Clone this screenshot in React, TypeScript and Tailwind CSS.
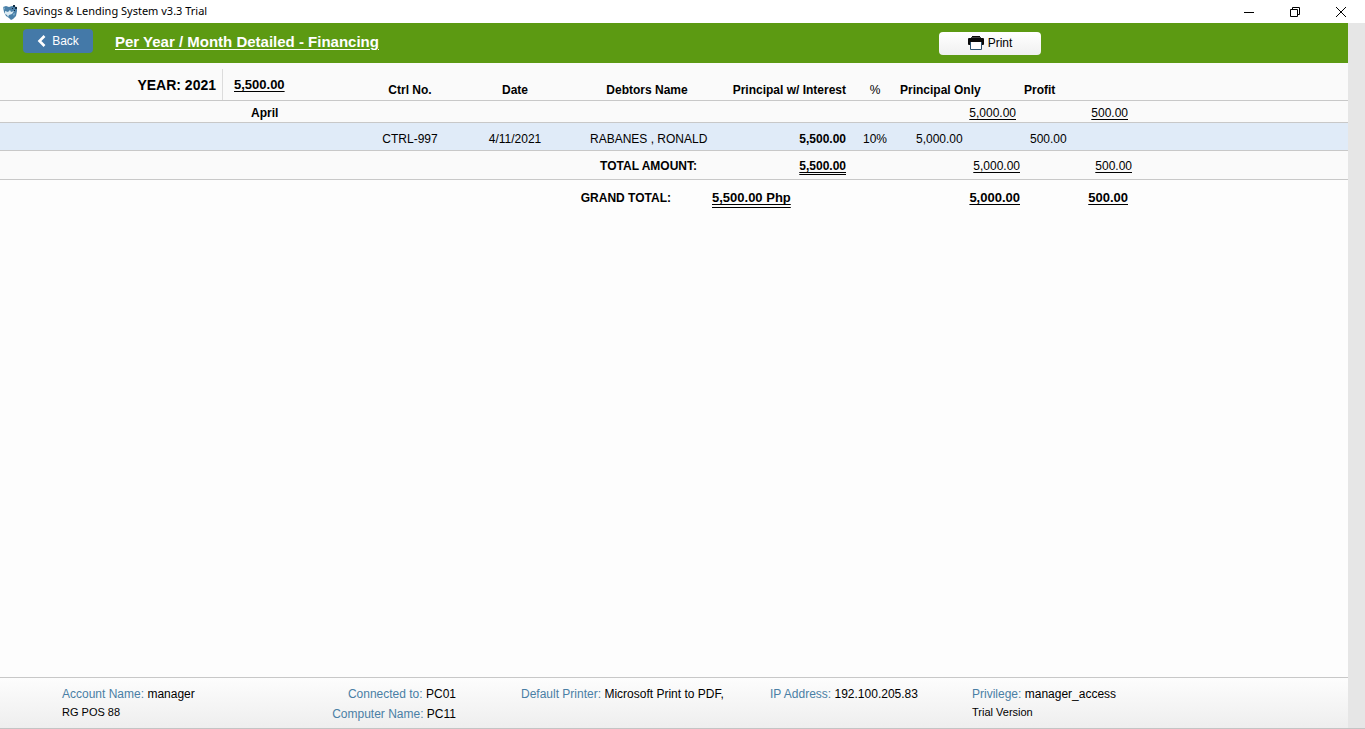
interface Loan {
    ctrlNo: string;
    date: string;
    debtor: string;
    total: string;
    rate: string;
    principal: string;
    profit: string;
}

const loans: Loan[] = [
    {
        ctrlNo: 'CTRL-997',
        date: '4/11/2021',
        debtor: 'RABANES , RONALD',
        total: '5,500.00',
        rate: '10%',
        principal: '5,000.00',
        profit: '500.00',
    },
];

function AppLogo() {
    return (
        <svg viewBox="0 0 16 16" className="h-4 w-4" aria-hidden="true">
            <path d="M1 3l3-1 3 1 3-1 5 1v4l-1 5-3 3-2 1-2-2-3-2-2-4z" fill="#4a80a8" />
            <path d="M3 7l3 1 2-2 1 2 3-1-2 3-3 1-1 2-1-2-2-1z" fill="#dcebf3" />
            <path d="M11 1h2v2h-2zM13 3h2v2h-2zM10 4h1v1h-1zM12 6h1v1h-1z" fill="#142f45" />
            <path d="M1 3l2 1-1 2zM11 10l2-1-1 3z" fill="#8fbad2" />
        </svg>
    );
}

function BackIcon() {
    return (
        <svg viewBox="0 0 9 12" className="h-3 w-[9px]" fill="none" stroke="#fff" strokeWidth="2.600" aria-hidden="true">
            <path d="M7.500 1L2.500 6l5 5" />
        </svg>
    );
}

function PrinterIcon() {
    return (
        <svg viewBox="0 0 16 14" className="h-3.5 w-4" aria-hidden="true">
            <path d="M4 0h8v1H4zM1 2h14q1 0 1 1v5q0 1-1 1H1Q0 9 0 8V3q0-1 1-1z" fill="#0a0a0a" />
            <path d="M3 1h10v1H3z" fill="#444" />
            <path d="M2.500 5.500h11v8h-11z" fill="#fff" stroke="#29506f" />
            <path d="M2 5h12v1H2z" fill="#0a0a0a" />
        </svg>
    );
}

function MinimizeIcon() {
    return (
        <svg viewBox="0 0 10 10" className="h-2.5 w-2.5" stroke="#000" aria-hidden="true">
            <path d="M0 5.500h10" />
        </svg>
    );
}

function RestoreIcon() {
    return (
        <svg viewBox="0 0 10 10" className="h-2.5 w-2.5" fill="none" stroke="#000" aria-hidden="true">
            <path d="M.5 2.500h7v7h-7zM2.500 2.500v-2h7v7h-2" />
        </svg>
    );
}

function CloseIcon() {
    return (
        <svg viewBox="0 0 10 10" className="h-2.5 w-2.5" stroke="#000" aria-hidden="true">
            <path d="M0 0l10 10M10 0L0 10" />
        </svg>
    );
}

function Info({ label, value }: { label: string; value: string }) {
    return (
        <p className="whitespace-nowrap">
            <span className="text-[#4a7fa5]">{label}:</span> {value}
        </p>
    );
}

export default function App() {
    return (
        <div className="flex min-h-screen flex-col border-b border-[#c4c4c4] bg-white font-['Liberation_Sans',Arial,sans-serif] text-xs text-black">
            {/* Window title bar */}
            <div className="flex h-[23px] items-center justify-between pl-0.5">
                <div className="flex items-center gap-[5px]">
                    <AppLogo />
                    <h1 className="font-['Noto_Sans',sans-serif] text-[11px]">Savings &amp; Lending System v3.3 Trial</h1>
                </div>
                <div className="flex pr-px">
                    <button aria-label="Minimize" className="flex h-5 w-[46px] items-center justify-center">
                        <MinimizeIcon />
                    </button>
                    <button aria-label="Restore" className="flex h-5 w-[46px] items-center justify-center">
                        <RestoreIcon />
                    </button>
                    <button aria-label="Close" className="flex h-5 w-[46px] items-center justify-center">
                        <CloseIcon />
                    </button>
                </div>
            </div>

            <div className="flex flex-1">
                <div className="flex min-w-0 flex-1 flex-col">
                    {/* Toolbar */}
                    <header className="flex h-10 items-center bg-[#5c9a12] pl-[23px]">
                        <button className="mb-1 flex h-6 w-[70px] items-center justify-center gap-1.5 rounded-sm bg-[#4479a8] text-white">
                            <BackIcon />
                            Back
                        </button>
                        <h2 className="ml-[22px] w-[824px] pb-0.5 text-[15px] font-bold text-white underline underline-offset-2">
                            Per Year / Month Detailed - Financing
                        </h2>
                        <button className="flex h-[23px] w-[102px] items-center justify-center gap-1 rounded-sm bg-linear-to-b from-white to-[#f0f0f0]">
                            <PrinterIcon />
                            Print
                        </button>
                    </header>

                    <main className="flex-1 bg-[#fdfdfd]">
                        <table className="w-full table-fixed border-separate border-spacing-0 whitespace-nowrap">
                            <colgroup>
                                <col className="w-[223px]" />
                                <col className="w-[135px]" />
                                <col className="w-[104px]" />
                                <col className="w-[106px]" />
                                <col className="w-[144px]" />
                                <col className="w-[134px]" />
                                <col className="w-[54px]" />
                                <col className="w-[120px]" />
                                <col className="w-[112px]" />
                                <col />
                            </colgroup>
                            <thead>
                                <tr className="h-[38px] bg-[#fafafa] *:border-b *:border-[#c8c8c8] *:p-0">
                                    <th className="pt-1.5! text-right text-sm">
                                        <div className="border-r border-[#dcdcdc] pt-1.5 pr-1.5 pb-[5px]">YEAR: 2021</div>
                                    </th>
                                    <th className="pt-1.5! text-left text-[13px]">
                                        <span className="ml-[11px] underline underline-offset-2">5,500.00</span>
                                    </th>
                                    <th className="pt-4!">Ctrl No.</th>
                                    <th className="pt-4!">Date</th>
                                    <th className="pt-4! pl-3.5!">Debtors Name</th>
                                    <th className="pt-4! text-right">Principal w/ Interest</th>
                                    <th className="pt-4! pl-1! font-normal">%</th>
                                    <th className="pt-4! text-left">Principal Only</th>
                                    <th className="pt-4! pl-1! text-left">Profit</th>
                                    <th />
                                </tr>
                            </thead>
                            <tbody>
                                <tr className="h-[22px] bg-[#fafafa] *:border-b *:border-[#c8c8c8] *:p-0 *:pt-0.5">
                                    <td />
                                    <th className="pl-7! text-left">April</th>
                                    <td colSpan={5} />
                                    <td className="pr-1! text-right underline underline-offset-2">5,000.00</td>
                                    <td className="pr-1! text-right underline underline-offset-2">500.00</td>
                                    <td />
                                </tr>
                                {loans.map((loan) => (
                                    <tr
                                        key={loan.ctrlNo}
                                        className="h-7 bg-[#e0ebf8] *:border-b *:border-[#c8c8c8] *:p-0 *:pt-1"
                                    >
                                        <td colSpan={2} />
                                        <td className="text-center">{loan.ctrlNo}</td>
                                        <td className="text-center">{loan.date}</td>
                                        <td className="pl-[22px]!">{loan.debtor}</td>
                                        <td className="text-right font-bold">{loan.total}</td>
                                        <td className="pl-1! text-center">{loan.rate}</td>
                                        <td className="pl-4!">{loan.principal}</td>
                                        <td className="pl-2.5!">{loan.profit}</td>
                                        <td />
                                    </tr>
                                ))}
                                <tr className="h-[29px] bg-[#fafafa] *:border-b *:border-[#c8c8c8] *:p-0 *:pt-0.5">
                                    <td colSpan={4} />
                                    <th className="pr-[15px]! text-right">TOTAL AMOUNT:</th>
                                    <td className="text-right font-bold underline decoration-double underline-offset-2">
                                        5,500.00
                                    </td>
                                    <td />
                                    <td className="text-right underline underline-offset-2">5,000.00</td>
                                    <td className="text-right underline underline-offset-2">500.00</td>
                                    <td />
                                </tr>
                            </tbody>
                            <tfoot>
                                <tr className="h-9 *:p-0">
                                    <td colSpan={4} />
                                    <th className="pr-[41px]! text-right">GRAND TOTAL:</th>
                                    <td className="text-[13px] font-bold underline decoration-double underline-offset-2">
                                        5,500.00 Php
                                    </td>
                                    <td />
                                    <td className="text-right text-[13px] font-bold underline underline-offset-2">
                                        5,000.00
                                    </td>
                                    <td className="pr-1! text-right text-[13px] font-bold underline underline-offset-2">
                                        500.00
                                    </td>
                                    <td />
                                </tr>
                            </tfoot>
                        </table>
                    </main>

                    {/* Status bar */}
                    <footer className="grid h-[51px] grid-cols-[240px_154px_249px_202px_1fr] border-t border-[#c8c8c8] bg-linear-to-b from-[#fdfdfd] to-[#eeeeee] pt-1.5 pl-[62px] leading-5">
                        <div>
                            <Info label="Account Name" value="manager" />
                            <p className="text-[11px] leading-4">RG POS 88</p>
                        </div>
                        <div className="text-right">
                            <Info label="Connected to" value="PC01" />
                            <Info label="Computer Name" value="PC11" />
                        </div>
                        <div className="pl-[65px]">
                            <Info label="Default Printer" value="Microsoft Print to PDF," />
                        </div>
                        <div className="pl-[65px]">
                            <Info label="IP Address" value="192.100.205.83" />
                        </div>
                        <div className="pl-[65px]">
                            <Info label="Privilege" value="manager_access" />
                            <p className="text-[11px] leading-4">Trial Version</p>
                        </div>
                    </footer>
                </div>
                {/* Scrollbar track */}
                <div className="w-[17px] bg-[#e6e6e6]" />
            </div>
        </div>
    );
}
